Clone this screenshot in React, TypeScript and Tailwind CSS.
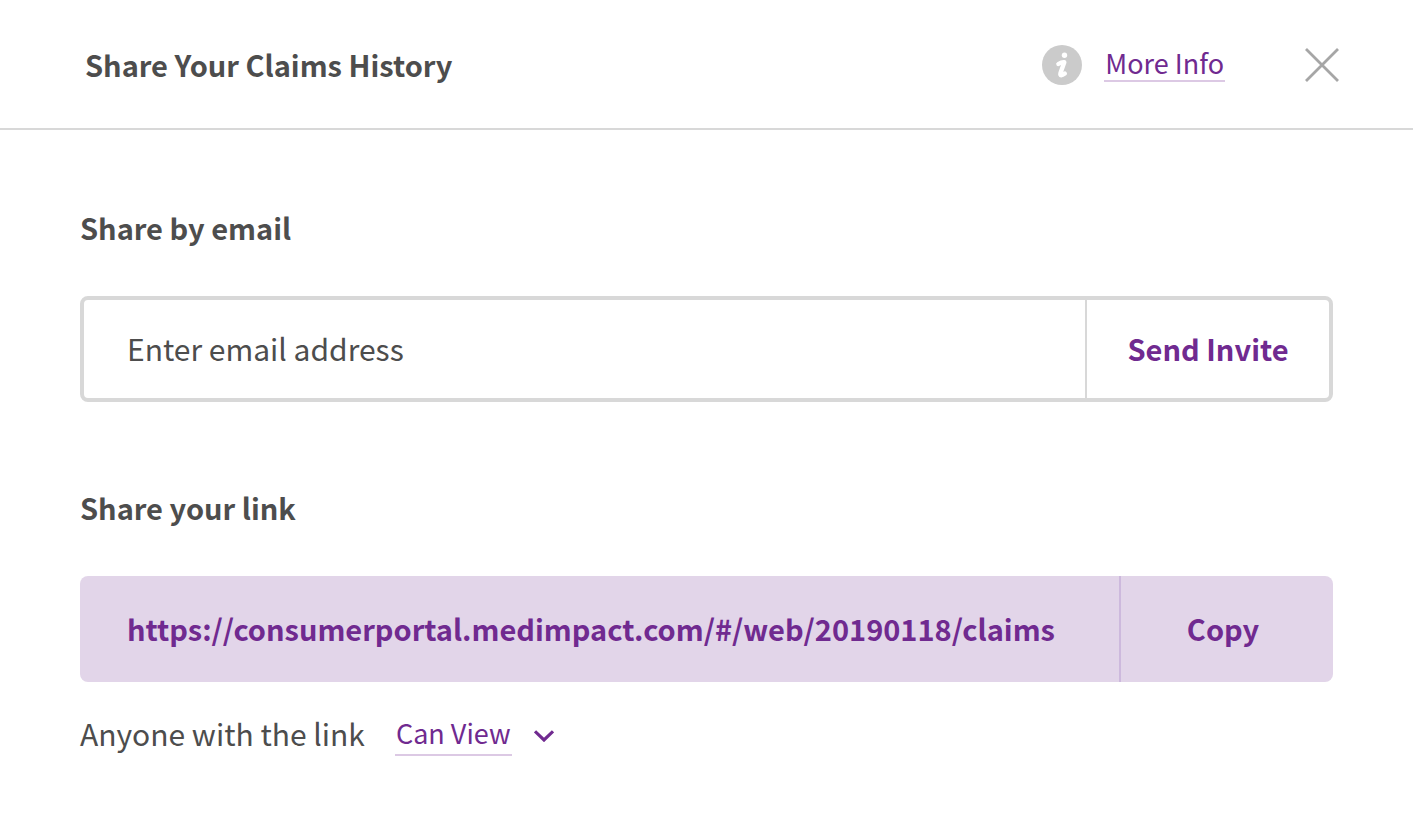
import { useState } from 'react'

const SHARE_LINK = 'https://consumerportal.medimpact.com/#/web/20190118/claims'

function InfoIcon() {
  return (
    <svg viewBox="0 0 40 40" className="size-10" aria-hidden="true">
      <circle cx="20" cy="20" r="20" fill="#cbcbcb" />
      <circle cx="22.5" cy="10.2" r="2.7" fill="#fff" />
      <path
        d="M16.400 19c1.600-1 4-2 5.900-1.800l-3.800 10.800c-.8 3 1.400 2.800 4.300.6"
        fill="none"
        stroke="#fff"
        strokeWidth="4.400"
        strokeLinecap="round"
        strokeLinejoin="round"
      />
    </svg>
  )
}

function CloseIcon() {
  return (
    <svg viewBox="0 0 34 34" className="size-[34px]" aria-hidden="true">
      <path d="M1 1l32 32M33 1L1 33" fill="none" stroke="#a6a6a6" strokeWidth="2.800" />
    </svg>
  )
}

function ChevronIcon() {
  return (
    <svg viewBox="0 0 20 12" className="mt-1 h-3 w-5" aria-hidden="true">
      <path d="M1 1.300L10 10l9-8.700" fill="none" stroke="#702a90" strokeWidth="3.200" />
    </svg>
  )
}

export default function App() {
  const [email, setEmail] = useState('')
  const [access, setAccess] = useState('view')

  const handleCopy = () => {
    navigator.clipboard?.writeText(SHARE_LINK)
  }

  return (
    <div className="min-h-screen bg-white font-['Noto_Sans_CJK_SC',sans-serif] text-[30px] leading-10 text-[#4d4d4d]">
      <header className="flex items-center justify-between border-b-2 border-[#d8d8d8] pt-11 pr-[74px] pb-[42px] pl-[85px]">
        <h1 className="pb-0.5 text-[29px] leading-10 font-bold">Share Your Claims History</h1>
        <div className="flex items-center">
          <InfoIcon />
          <a
            href="#more-info"
            className="ml-[22px] border-b-2 border-[#dcc9e4] px-px pb-0.5 text-[27px] leading-[30px] text-[#702a90]"
          >
            More Info
          </a>
          <button type="button" aria-label="Close" className="ml-20">
            <CloseIcon />
          </button>
        </div>
      </header>

      <main className="px-20 pt-[77px]">
        <form onSubmit={(e) => e.preventDefault()}>
          <label htmlFor="email" className="block text-[29px] leading-10 font-bold">
            Share by email
          </label>
          <div className="mt-[49px] flex rounded-lg border-4 border-[#d8d8d8]">
            <input
              id="email"
              type="email"
              value={email}
              onChange={(e) => setEmail(e.target.value)}
              placeholder="Enter email address"
              className="min-w-0 flex-1 px-[43px] pt-7 pb-[30px] outline-none placeholder:text-[#4d4d4d]"
            />
            <button
              type="submit"
              className="w-[244px] border-l-2 border-[#d8d8d8] pb-0.5 text-[29px] leading-10 font-bold text-[#702a90]"
            >
              Send Invite
            </button>
          </div>
        </form>

        <section>
          <h2 className="mt-[85px] text-[29px] leading-10 font-bold">Share your link</h2>
          <div className="mt-[49px] flex rounded-lg bg-[#e2d5e9] text-[29px] leading-10 font-bold text-[#702a90]">
            <a href={SHARE_LINK} className="min-w-0 flex-1 pt-8 pb-[34px] pl-[47px]">
              {SHARE_LINK}
            </a>
            <button type="button" onClick={handleCopy} className="w-[214px] border-l-2 border-[#cdb9dd] pr-2 pb-0.5">
              Copy
            </button>
          </div>

          <div className="mt-[30px] flex items-center">
            <label htmlFor="access" className="pb-0.5">
              Anyone with the link
            </label>
            <div className="ml-[30px] flex items-center gap-[22px]">
              <select
                id="access"
                value={access}
                onChange={(e) => setAccess(e.target.value)}
                className="appearance-none border-b-2 border-[#dcc9e4] p-px text-[27px] leading-10 text-[#702a90] outline-none"
              >
                <option value="view">Can View</option>
                <option value="edit">Can Edit</option>
              </select>
              <ChevronIcon />
            </div>
          </div>
        </section>
      </main>
    </div>
  )
}
